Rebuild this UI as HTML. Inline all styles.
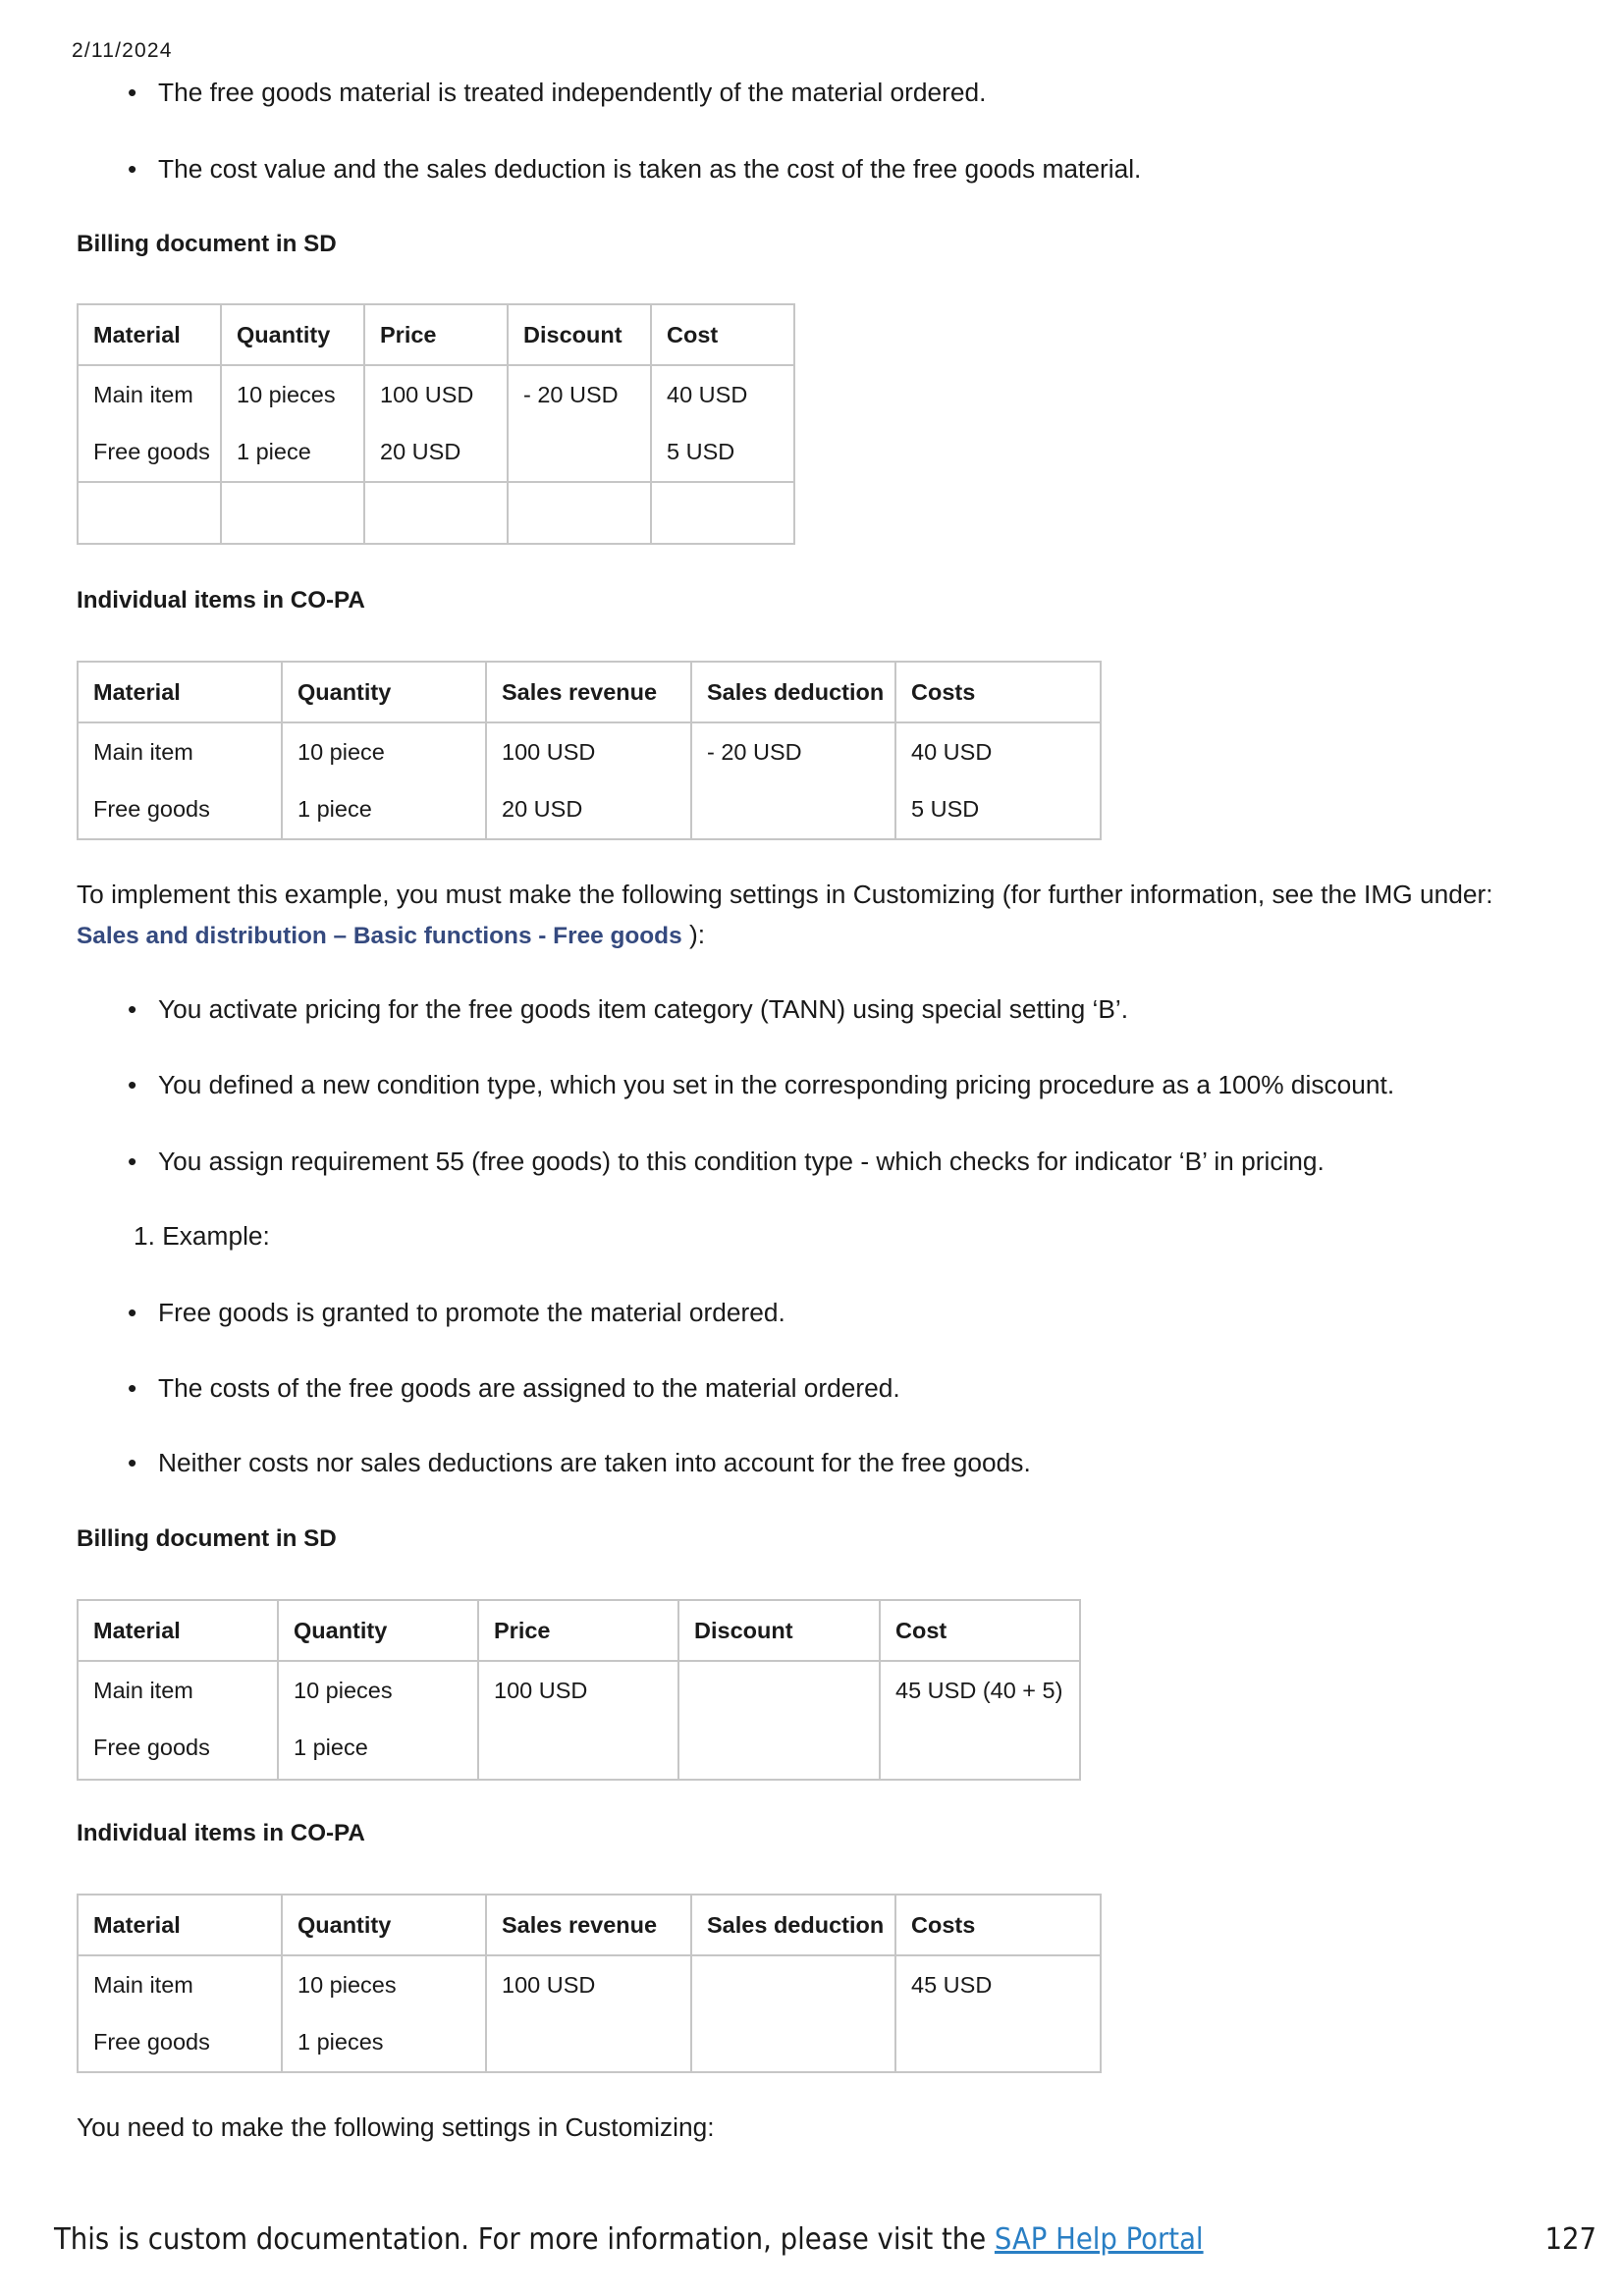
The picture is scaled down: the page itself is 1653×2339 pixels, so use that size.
<!DOCTYPE html>
<html><head><meta charset="utf-8"><style>
body{margin:0;width:1653px;height:2339px;background:#fff;position:relative;font-family:"Liberation Sans",sans-serif;color:#1a1a1a;overflow:hidden}
.a{position:absolute;white-space:nowrap;font-size:26.3px;line-height:30px}
.hd{font-weight:bold;font-size:24.2px}
table{position:absolute;border-collapse:collapse;table-layout:fixed;font-size:23.5px}
td{border:2px solid #c6c6c6;padding:0 0 0 15px;vertical-align:top;line-height:58px;white-space:nowrap;overflow:hidden}
tr.h td{font-weight:bold;line-height:60px;height:60px}
tr.r td{height:117px}
tr.e td{height:61px}
.lk{color:#354a7f;font-weight:bold;font-size:24.4px}
</style></head><body>
<div class="a" style="left:73px;top:37px;font-size:21px;letter-spacing:1.2px">2/11/2024</div>
<div class="a" style="left:130px;top:79px">•</div><div class="a" style="left:161px;top:79px">The free goods material is treated independently of the material ordered.</div>
<div class="a" style="left:130px;top:157px">•</div><div class="a" style="left:161px;top:157px">The cost value and the sales deduction is taken as the cost of the free goods material.</div>
<div class="a hd" style="left:78px;top:234px">Billing document in SD</div>
<table style="left:78px;top:309px;width:730px"><colgroup><col style="width:146px"><col style="width:146px"><col style="width:146px"><col style="width:146px"><col style="width:146px"></colgroup>
<tr class="h"><td>Material</td><td>Quantity</td><td>Price</td><td>Discount</td><td>Cost</td></tr>
<tr class="r"><td>Main item<br>Free goods</td><td>10 pieces<br>1 piece</td><td>100 USD<br>20 USD</td><td>- 20 USD</td><td>40 USD<br>5 USD</td></tr>
<tr class="e"><td></td><td></td><td></td><td></td><td></td></tr></table>
<div class="a hd" style="left:78px;top:597px">Individual items in CO-PA</div>
<table style="left:78px;top:673px;width:1042px"><colgroup><col style="width:208px"><col style="width:208px"><col style="width:209px"><col style="width:208px"><col style="width:209px"></colgroup>
<tr class="h"><td>Material</td><td>Quantity</td><td>Sales revenue</td><td>Sales deduction</td><td>Costs</td></tr>
<tr class="r"><td>Main item<br>Free goods</td><td>10 piece<br>1 piece</td><td>100 USD<br>20 USD</td><td>- 20 USD</td><td>40 USD<br>5 USD</td></tr></table>
<div class="a" style="left:78px;top:896px">To implement this example, you must make the following settings in Customizing (for further information, see the IMG under:</div>
<div class="a" style="left:78px;top:937px"><span class="lk">Sales and distribution – Basic functions - Free goods</span> ):</div>
<div class="a" style="left:130px;top:1013px">•</div><div class="a" style="left:161px;top:1013px">You activate pricing for the free goods item category (TANN) using special setting ‘B’.</div>
<div class="a" style="left:130px;top:1090px">•</div><div class="a" style="left:161px;top:1090px">You defined a new condition type, which you set in the corresponding pricing procedure as a 100% discount.</div>
<div class="a" style="left:130px;top:1168px">•</div><div class="a" style="left:161px;top:1168px">You assign requirement 55 (free goods) to this condition type - which checks for indicator ‘B’ in pricing.</div>
<div class="a" style="left:136px;top:1244px">1. Example:</div>
<div class="a" style="left:130px;top:1322px">•</div><div class="a" style="left:161px;top:1322px">Free goods is granted to promote the material ordered.</div>
<div class="a" style="left:130px;top:1399px">•</div><div class="a" style="left:161px;top:1399px">The costs of the free goods are assigned to the material ordered.</div>
<div class="a" style="left:130px;top:1475px">•</div><div class="a" style="left:161px;top:1475px">Neither costs nor sales deductions are taken into account for the free goods.</div>
<div class="a hd" style="left:78px;top:1553px">Billing document in SD</div>
<table style="left:78px;top:1629px;width:1021px"><colgroup><col style="width:204px"><col style="width:204px"><col style="width:204px"><col style="width:205px"><col style="width:204px"></colgroup>
<tr class="h"><td>Material</td><td>Quantity</td><td>Price</td><td>Discount</td><td>Cost</td></tr>
<tr class="r"><td style="height:119px">Main item<br>Free goods</td><td>10 pieces<br>1 piece</td><td>100 USD</td><td></td><td>45 USD (40 + 5)</td></tr></table>
<div class="a hd" style="left:78px;top:1853px">Individual items in CO-PA</div>
<table style="left:78px;top:1929px;width:1042px"><colgroup><col style="width:208px"><col style="width:208px"><col style="width:209px"><col style="width:208px"><col style="width:209px"></colgroup>
<tr class="h"><td>Material</td><td>Quantity</td><td>Sales revenue</td><td>Sales deduction</td><td>Costs</td></tr>
<tr class="r"><td>Main item<br>Free goods</td><td>10 pieces<br>1 pieces</td><td>100 USD</td><td></td><td>45 USD</td></tr></table>
<div class="a" style="left:78px;top:2152px">You need to make the following settings in Customizing:</div>
<div class="a" style="left:55px;top:2264px;font-family:'DejaVu Sans Condensed','DejaVu Sans',sans-serif;font-size:30.6px;line-height:36px">This is custom documentation. For more information, please visit the <span style="color:#2a7fc4;text-decoration:underline">SAP Help Portal</span></div>
<div class="a" style="right:27px;top:2264px;font-family:'DejaVu Sans Condensed','DejaVu Sans',sans-serif;font-size:30.6px;line-height:36px">127</div>
</body></html>
